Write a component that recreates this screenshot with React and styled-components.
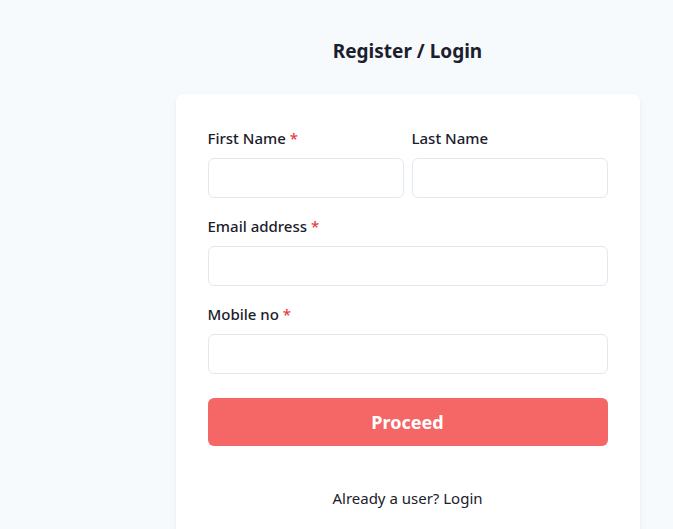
import React from "react";
import styled, { createGlobalStyle } from "styled-components";

const GlobalStyle = createGlobalStyle`
  * { box-sizing: border-box; }
  body {
    margin: 0;
    background: #f7fafc;
    font-family: "Noto Sans", "Open Sans", sans-serif;
    color: #1a202c;
  }
`;

const Page = styled.div`
  min-height: 100vh;
  display: flex;
  flex-direction: column;
  align-items: center;
  padding: 37px 0 0 142px;
`;

const Title = styled.h1`
  margin: 0 0 29px;
  font-size: 19px;
  line-height: 28px;
  font-weight: 700;
  color: #1a202c;
`;

const Card = styled.form`
  width: 464px;
  background: #fff;
  border-radius: 8px;
  box-shadow: 0 1px 3px rgba(0, 0, 0, 0.04), 0 4px 12px rgba(0, 0, 0, 0.03);
  padding: 32px 32px 40px;
  display: flex;
  flex-direction: column;
  gap: 16px;
`;

const Row = styled.div`
  display: grid;
  grid-template-columns: 1fr 1fr;
  gap: 8px;
`;

const Field = styled.div`
  display: flex;
  flex-direction: column;
  gap: 8px;
`;

const Label = styled.label`
  font-size: 15px;
  line-height: 24px;
  font-weight: 500;
  color: #1a202c;
`;

const Star = styled.span`
  color: #e53e3e;
`;

const Input = styled.input`
  height: 40px;
  width: 100%;
  border: 1px solid #e2e8f0;
  border-radius: 6px;
  padding: 0 12px;
  font: inherit;
  outline: none;
`;

const Button = styled.button`
  margin-top: 8px;
  height: 48px;
  border: none;
  border-radius: 6px;
  background: #f56767;
  color: #fff;
  font-family: inherit;
  font-size: 18px;
  font-weight: 700;
`;

const Footer = styled.p`
  margin: 24px 0 0;
  text-align: center;
  font-size: 15px;
  line-height: 24px;
  color: #1a202c;
`;

const FieldBlock = ({ label, required }) => (
  <Field>
    <Label>
      {label}
      {required && <Star> *</Star>}
    </Label>
    <Input />
  </Field>
);

export default function App() {
  return (
    <>
      <GlobalStyle />
      <Page>
        <Title>Register / Login</Title>
        <Card onSubmit={e => e.preventDefault()}>
          <Row>
            <FieldBlock label="First Name" required />
            <FieldBlock label="Last Name" />
          </Row>
          <FieldBlock label="Email address" required />
          <FieldBlock label="Mobile no" required />
          <Button type="submit">Proceed</Button>
          <Footer>Already a user? Login</Footer>
        </Card>
      </Page>
    </>
  );
}
